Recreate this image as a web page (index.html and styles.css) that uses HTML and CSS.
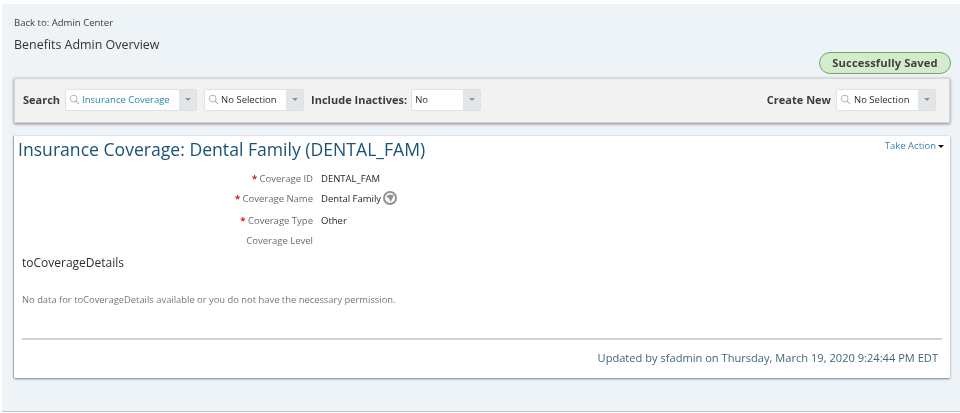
FILE: index.html
```html
<!DOCTYPE html>
<html lang="en">
<head>
<meta charset="utf-8">
<title>Benefits Admin Overview</title>
<link rel="stylesheet" href="styles.css">
</head>
<body>
<main class="page">
  <a class="back">Back to: Admin Center</a>
  <h1 class="title">Benefits Admin Overview</h1>
  <div class="notice-row"><span class="notice">Successfully Saved</span></div>
  <section class="toolbar">
    <span class="tb-label">Search</span>
    <span class="combo combo-a">
      <span class="combo-input"><svg class="mag" viewBox="0 0 12 12"><circle cx="5" cy="5" r="3.6"/><path d="M7.7 7.7 11 11"/></svg><span class="val-link">Insurance Coverage</span></span>
      <span class="combo-btn"><i class="caret"></i></span>
    </span>
    <span class="combo combo-b">
      <span class="combo-input"><svg class="mag" viewBox="0 0 12 12"><circle cx="5" cy="5" r="3.6"/><path d="M7.7 7.7 11 11"/></svg><span>No Selection</span></span>
      <span class="combo-btn"><i class="caret"></i></span>
    </span>
    <span class="tb-label">Include Inactives:</span>
    <span class="combo combo-c">
      <span class="combo-input"><span>No</span></span>
      <span class="combo-btn"><i class="caret"></i></span>
    </span>
    <span class="spacer"></span>
    <span class="tb-label">Create New</span>
    <span class="combo combo-d">
      <span class="combo-input"><svg class="mag" viewBox="0 0 12 12"><circle cx="5" cy="5" r="3.6"/><path d="M7.7 7.7 11 11"/></svg><span>No Selection</span></span>
      <span class="combo-btn"><i class="caret"></i></span>
    </span>
  </section>
  <section class="card">
    <div class="card-head">
      <h2 class="card-title">Insurance Coverage: Dental Family (DENTAL_FAM)</h2>
      <a class="action">Take Action<i class="action-caret"></i></a>
    </div>
    <dl class="fields">
      <div class="field f1"><dt><b>*</b> Coverage ID</dt><dd>DENTAL_FAM</dd></div>
      <div class="field f2"><dt><b>*</b> Coverage Name</dt><dd>Dental Family<svg class="globe" viewBox="0 0 14 14"><circle cx="7" cy="7" r="6"/><path d="M3 5 7 3.4 11 4.6 7.6 11 6 7.4z"/></svg></dd></div>
      <div class="field f3"><dt><b>*</b> Coverage Type</dt><dd>Other</dd></div>
      <div class="field f4"><dt>Coverage Level</dt><dd></dd></div>
    </dl>
    <h3 class="sub">toCoverageDetails</h3>
    <p class="empty">No data for toCoverageDetails available or you do not have the necessary permission.</p>
    <footer class="updated">Updated by sfadmin on Thursday, March 19, 2020 9:24:44 PM EDT</footer>
  </section>
</main>
</body>
</html>
```
FILE: styles.css
```css
* { box-sizing: border-box; }
html, body { margin: 0; height: 413px; overflow: hidden; background: #fff; }
body { font-family: "Open Sans", "Noto Sans", sans-serif; color: #333; padding: 4px 0 1px 2px; }
.page {
  height: 408px;
  background: #eef3f8;
  border-bottom: 1px solid #b9c4cf;
  padding: 12px 10px 0 12px;
  filter: blur(0.35px);
}
.back { display: block; font-size: 9.55px; line-height: 14px; color: #3c3c3c; }
.title { margin: 6px 0 0; font-size: 12.45px; font-weight: 400; line-height: 18px; color: #333; }
.notice-row { display: flex; justify-content: flex-end; margin-top: -2px; margin-right: -1px; height: 22px; }
.notice {
  display: flex; align-items: center; justify-content: center;
  width: 132px; height: 22px; padding-bottom: 2px;
  background: #d4eccd; border: 1px solid #6fa964; border-radius: 11px;
  font-size: 11.2px; font-weight: 700; color: #3c4340; letter-spacing: .1px;
}
.toolbar {
  display: flex; align-items: center;
  height: 45px; margin-top: 4px; padding: 0 13px 2px 8px;
  background: #f2f2f2; border: 1px solid #d5d5d5;
  box-shadow: 0 1px 3px rgba(0,0,0,.45);
}
.tb-label { font-size: 11px; font-weight: 700; color: #3c3c3c; white-space: nowrap; }
.combo { display: flex; height: 22px; background: #e3e6e8; border: 1px solid #dfe2e4; border-radius: 2px; font-size: 9.5px; color: #2e2e2e; }
.combo-a { width: 132px; margin-left: 5px; }
.combo-b { width: 100px; margin-left: 7px; margin-right: 7px; }
.combo-c { width: 70px; margin-left: 4px; }
.combo-d { width: 100px; margin-left: 5px; }
.combo-input { flex: 1; display: flex; align-items: center; gap: 2px; padding-left: 3px; background: #fff; white-space: nowrap; overflow: hidden; }
.combo-d .combo-input { gap: 3px; }
.combo-btn { width: 17px; display: flex; align-items: center; justify-content: center; }
.caret { width: 0; height: 0; border: 3px solid transparent; border-top: 3px solid #8b9196; border-bottom: 0; }
.mag { width: 11px; height: 11px; flex: none; fill: none; stroke: #b5b8ba; stroke-width: 1.1; }
.val-link { color: #2a86ac; }
.spacer { flex: 1; }
.card {
  height: 242px; margin-top: 13px; padding: 0 8px 0 4px;
  background: #fff;
  box-shadow: 0 1px 2px rgba(0,0,0,.45), -1px 0 1px rgba(0,0,0,.18);
  display: flex; flex-direction: column;
}
.card-head { display: flex; justify-content: space-between; align-items: flex-start; height: 26px; }
.card-title { margin: 0; font-size: 17.6px; font-weight: 400; line-height: 26px; color: #195372; white-space: nowrap; }
.action { margin-top: 3px; margin-right: -2px; font-size: 9.5px; line-height: 14px; color: #3583b8; white-space: nowrap; display: flex; align-items: center; }
.action-caret { width: 0; height: 0; margin-left: 2px; border: 3px solid transparent; border-top: 3px solid #111; border-bottom: 0; margin-top: 1px; }
.fields { margin: 0; }
.field { display: grid; grid-template-columns: 295px 1fr; column-gap: 8px; align-items: center; font-size: 9.5px; }
.f1 { margin-top: 8px; height: 16px; }
.f2 { margin-top: 3px; height: 18px; }
.f3 { margin-top: 5px; height: 16px; }
.f4 { margin-top: 4px; height: 16px; }
dt { text-align: right; color: #6b6b6b; white-space: nowrap; }
dt b { color: #d9161c; font-weight: 700; }
dd { margin: 0; color: #262626; display: flex; align-items: center; gap: 2px; }
.globe { width: 14px; height: 14px; flex: none; }
.globe circle { fill: #fff; stroke: #939393; stroke-width: 2; }
.globe path { fill: #939393; }
.sub { margin: 6px 0 0 4px; font-size: 12px; font-weight: 400; line-height: 18px; color: #2e2e2e; }
.empty { margin: 21px 0 0 4px; font-size: 9.4px; line-height: 14px; color: #777; white-space: nowrap; }
.updated {
  margin: 31px 0 0 4px; padding: 9px 4px 0 0; border-top: 2px solid #d2d2d2;
  text-align: right; font-size: 11.1px; line-height: 18px; color: #3f6678; white-space: nowrap;
}
```
